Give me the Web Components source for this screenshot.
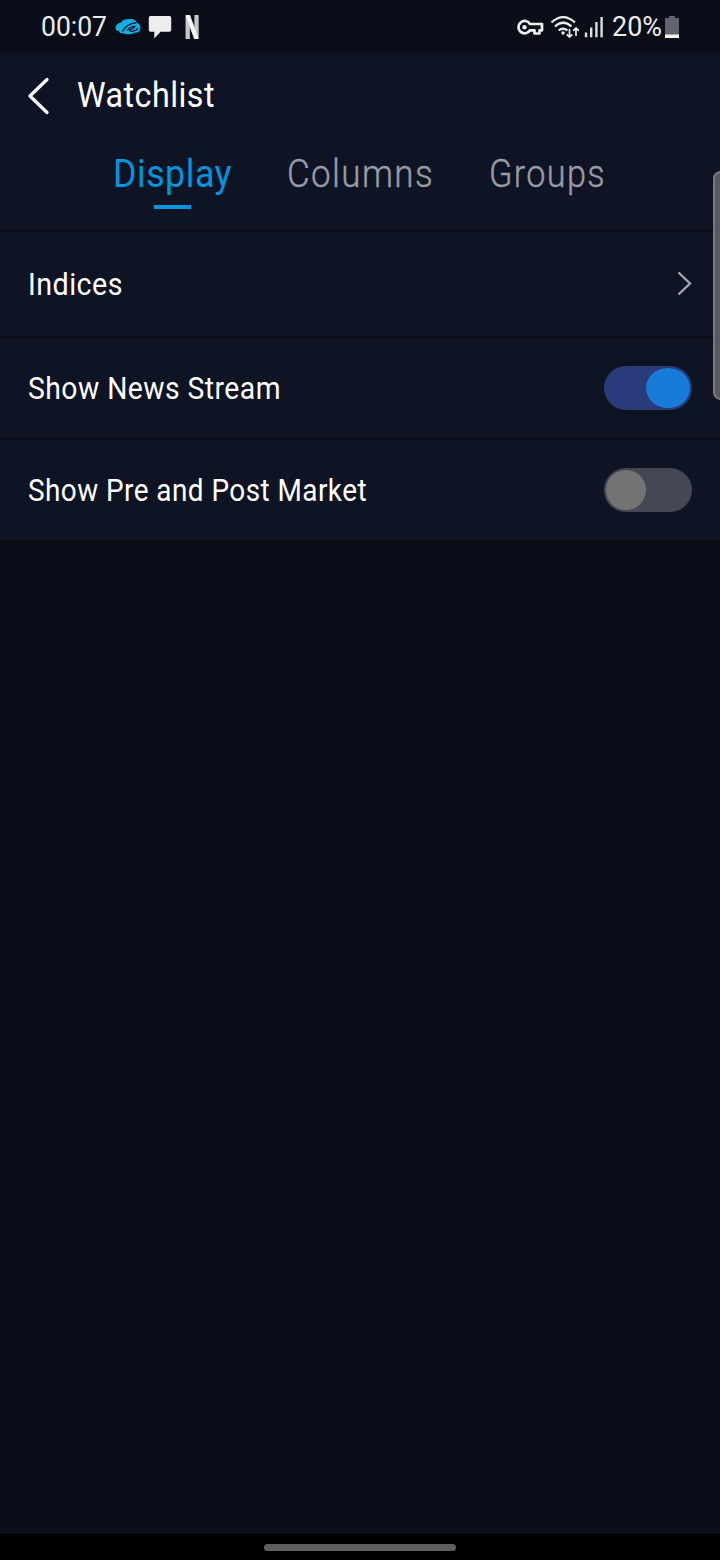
<!DOCTYPE html>
<html lang="en">
<head>
<meta charset="utf-8">
<title>Watchlist</title>
<style>
html,body{margin:0;height:100%;background:#0a0e19;overflow:hidden}
body{font-family:Roboto,"Liberation Sans",sans-serif;color:#fff}
</style>
</head>
<body>
<watchlist-app></watchlist-app>
<script>
class Base extends HTMLElement{
  constructor(){super();this.attachShadow({mode:'open'}).innerHTML=this.constructor.markup}
}
/* A one-line label whose glyphs are condensed to the width attribute. */
class FitText extends Base{
  static observedAttributes=['width'];
  static markup=`<style>:host{display:block;white-space:nowrap;flex:none;line-height:1.2}span{display:inline-block;transform-origin:0 50%}</style><span><slot></slot></span>`;
  connectedCallback(){this.fit()}
  attributeChangedCallback(){this.fit()}
  fit(){
    const w=+this.getAttribute('width'),s=this.shadowRoot.querySelector('span');
    if(!w||!this.isConnected)return;
    s.style.transform='none';
    const natural=s.getBoundingClientRect().width;
    if(!natural)return;
    this.style.width=w+'px';
    s.style.transform='scaleX('+w/natural+')';
  }
}
class StatusBar extends Base{
  static markup=`<style>
  :host{display:flex;height:53px;box-sizing:border-box;align-items:center;padding:1px 40px 0 40.5px;color:#ececec;font-size:27px;background:#0a0e19}
  svg{display:block;flex:none}.gap{flex:1}
  </style>
  <fit-text width="66">00:07</fit-text>
  <svg width="26" height="18" viewBox="0 0 26 18" style="margin-left:8px"><path fill="#12aee6" d="M.5 10.500C.5 7 3 5 6 4.500C8 1.500 12 .8 15 1.200C18 .8 21 2 21.500 4.500C25 5.500 26 9 25 12C24 14 22 15 20 14.500C17 16.500 12 17 9 15.500C6 16 4 14.500 4 13C2 13 .5 12 .5 10.500Z"/><path fill="none" stroke="#0a0e19" stroke-width="1.200" d="M7.500 13.500C10 8.500 15 5.500 21.500 4.700M12 12.500C14 9.500 18 8 20 8.500C19 10 16 11.500 14 12M14 12.500C17 14 20 13.500 23 10.500"/></svg>
  <svg width="24" height="24" viewBox="0 0 24 24" style="margin-left:7px"><path fill="#ededed" d="M2.500 1h19a1.700 1.700 0 0 1 1.700 1.700v12.400a1.700 1.700 0 0 1-1.700 1.700h-9L6.300 23.500v-6.700H2.500a1.700 1.700 0 0 1-1.700-1.700V2.700a1.700 1.700 0 0 1 1.700-1.700z"/></svg>
  <svg width="14" height="24" viewBox="0 0 14 24" style="margin-left:13px"><g stroke-width="4.300" fill="none"><path stroke="#c8c8c8" d="M2.700 0V24M11.500 0V24"/><path stroke="#f5f5f5" d="M2.700 0L11.500 24"/></g></svg>
  <div class="gap"></div>
  <svg width="28" height="18" viewBox="0 0 28 18"><path fill="none" stroke="#ededed" stroke-width="2.700" stroke-linejoin="round" d="M13 6A6.200 6.200 0 1 0 13 12.300H17.500V15.500H22.500V12.300H25V6Z"/><circle cx="7.500" cy="9.200" r="2.200" fill="#ededed"/></svg>
  <svg width="30" height="24" viewBox="0 0 30 24" style="margin-left:5px"><g fill="none" stroke="#ededed" stroke-width="2.200"><path d="M1.500 7.500Q13 -3.200 25 7.500M5 11.500Q13 4 21.500 11.500M8.700 15.500Q13 11.700 17.500 15.500"/></g><circle cx="13" cy="18" r="1.700" fill="#ededed"/><g fill="none" stroke="#ededed" stroke-width="1.700"><path d="M19.500 14V22M16.700 19.300L19.500 22L22.300 19.300M26 21V13M23.200 15.800L26 13L28.800 15.800"/></g></svg>
  <svg width="20" height="22" viewBox="0 0 20 22" style="margin-left:4px"><path fill="none" stroke="#dedede" stroke-width="2.400" d="M2 16.500V21.300M7.200 11.500V21.300M12.400 6V21.300M17.600 1V21.300"/></svg>
  <fit-text width="50" style="margin-left:8px">20%</fit-text>
  <svg width="16" height="24" viewBox="0 0 16 24" style="margin-left:2px"><path fill="#62646b" d="M5 1h6v2h4v17H1V3h4z"/><path fill="#f5f2f2" d="M1 19.500h14v3.500H1z"/></svg>`;
}
class TitleBar extends Base{
  static markup=`<style>:host{display:flex;align-items:center;height:85px;padding-left:27px;font-size:35px}svg{display:block;margin-right:28px}fit-text{letter-spacing:.5px}</style>
  <svg width="22" height="38" viewBox="0 0 22 38"><path d="M20 2.500L3 19L20 35.500" fill="none" stroke="#fff" stroke-width="3.200" stroke-linecap="round" stroke-linejoin="round"/></svg>
  <fit-text width="138"><slot></slot></fit-text>`;
}
class SizedLabel extends Base{
  connectedCallback(){this.shadowRoot.querySelector('fit-text').setAttribute('width',this.getAttribute('width'))}
}
class TabItem extends SizedLabel{
  static markup=`<style>:host{display:flex;flex-direction:column;align-items:center;color:#9a9ca4;font-size:38px;font-weight:300;letter-spacing:1.500px;-webkit-text-stroke:.4px}
  :host([active]){color:#0096df;font-weight:400;letter-spacing:.5px;-webkit-text-stroke:0}i{width:37px;height:4px;margin-top:7px}:host([active]) i{background:#0096df}</style>
  <fit-text><slot></slot></fit-text><i></i>`;
}
class TabStrip extends Base{
  static markup=`<style>:host{display:flex;height:92px;box-sizing:border-box;padding:14px 0 0 113px;gap:55px;align-items:flex-start}</style><slot></slot>`;
}
class SettingRow extends SizedLabel{
  static markup=`<style>:host{display:flex;align-items:center;justify-content:space-between;box-sizing:border-box;height:102px;padding:0 28px 0 27.5px;border-top:2px solid #0a0d18;font-size:31px;letter-spacing:.5px}:host([tall]){height:106px}fit-text{padding-top:2px}</style>
  <fit-text><slot></slot></fit-text><slot name="control"></slot>`;
}
class ToggleSwitch extends Base{
  static markup=`<style>:host{display:flex;align-items:center;box-sizing:border-box;width:88px;height:44px;padding:2px;border-radius:22px;background:#454754}
  i{width:40px;height:40px;border-radius:50%;background:#737373}
  :host([on]){background:#283b7a;justify-content:flex-end}:host([on]) i{width:44px;background:#197bd9}</style><i></i>`;
}
class ChevronIcon extends Base{
  static markup=`<style>:host,svg{display:block}</style><svg width="16" height="26" viewBox="0 0 16 26"><path d="M2.500 1.500L14 12.500L2.500 23.500" fill="none" stroke="#a6a8ae" stroke-width="2.300"/></svg>`;
}
class EdgeHandle extends Base{
  static markup=`<style>:host{position:absolute;right:-8px;top:171px;width:15px;height:229px;box-sizing:border-box;border:2px solid #7b7b7f;border-radius:8px;background:#565865}</style>`;
}
class HomeBar extends Base{
  static markup=`<style>:host{display:flex;height:26px;background:#000;justify-content:center;align-items:center}i{width:192px;height:7px;border-radius:4px;background:#5e5e5e}</style><i></i>`;
}
class WatchlistApp extends Base{
  static markup=`<style>:host{display:flex;flex-direction:column;position:relative;width:720px;height:1560px;overflow:hidden;background:#0a0e19}
  main{background:#0f1425}.fill{flex:1}</style>
  <status-bar></status-bar>
  <main>
    <title-bar>Watchlist</title-bar>
    <tab-strip><tab-item active width="119">Display</tab-item><tab-item width="147">Columns</tab-item><tab-item width="117">Groups</tab-item></tab-strip>
    <setting-row tall width="95">Indices<chevron-icon slot="control"></chevron-icon></setting-row>
    <setting-row width="253">Show News Stream<toggle-switch on slot="control"></toggle-switch></setting-row>
    <setting-row width="339">Show Pre and Post Market<toggle-switch slot="control"></toggle-switch></setting-row>
  </main>
  <div class="fill"></div>
  <home-bar></home-bar>
  <edge-handle></edge-handle>`;
}
customElements.define('fit-text',FitText);
customElements.define('status-bar',StatusBar);
customElements.define('title-bar',TitleBar);
customElements.define('tab-item',TabItem);
customElements.define('tab-strip',TabStrip);
customElements.define('setting-row',SettingRow);
customElements.define('toggle-switch',ToggleSwitch);
customElements.define('chevron-icon',ChevronIcon);
customElements.define('edge-handle',EdgeHandle);
customElements.define('home-bar',HomeBar);
customElements.define('watchlist-app',WatchlistApp);
</script>
</body>
</html>
